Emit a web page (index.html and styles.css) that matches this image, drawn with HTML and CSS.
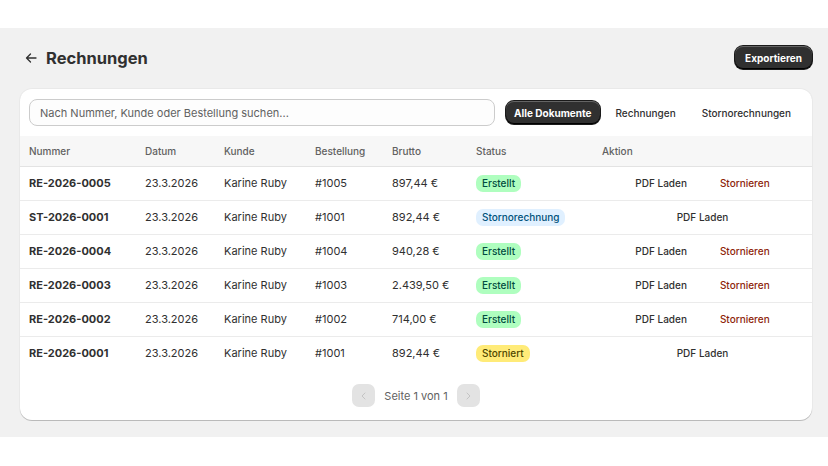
FILE: index.html
```html
<!DOCTYPE html>
<html lang="de">
<head>
    <meta charset="UTF-8">
    <meta name="viewport" content="width=device-width, initial-scale=1.0">
    <title>Rechnungen</title>
    <link rel="stylesheet" href="styles.css">
</head>
<body>
    <div class="topbar"></div>

    <div class="page">
        <div class="page-header">
            <div class="title-wrap">
                <svg class="back" viewBox="0 0 12 12" fill="none" stroke="#303030" stroke-width="1.3" stroke-linecap="round" stroke-linejoin="round">
                    <path d="M11 6H1.5M5.5 2L1.5 6l4 4"/>
                </svg>
                <h1>Rechnungen</h1>
            </div>
            <button class="btn-dark export">Exportieren</button>
        </div>

        <div class="card">
            <div class="toolbar">
                <input type="text" class="search" placeholder="Nach Nummer, Kunde oder Bestellung suchen...">
                <div class="tabs">
                    <button class="btn-dark tab active">Alle Dokumente</button>
                    <button class="tab plain">Rechnungen</button>
                    <button class="tab plain">Stornorechnungen</button>
                </div>
            </div>

            <table class="docs">
                <colgroup>
                    <col style="width:116px">
                    <col style="width:79px">
                    <col style="width:91px">
                    <col style="width:77px">
                    <col style="width:84px">
                    <col style="width:126px">
                    <col>
                </colgroup>
                <thead>
                    <tr>
                        <th>Nummer</th>
                        <th>Datum</th>
                        <th>Kunde</th>
                        <th>Bestellung</th>
                        <th>Brutto</th>
                        <th>Status</th>
                        <th>Aktion</th>
                    </tr>
                </thead>
                <tbody>
                    <tr>
                        <td class="num">RE-2026-0005</td>
                        <td>23.3.2026</td>
                        <td>Karine Ruby</td>
                        <td>#1005</td>
                        <td>897,44 €</td>
                        <td><span class="badge ok">Erstellt</span></td>
                        <td><div class="actions"><a>PDF Laden</a><a class="danger">Stornieren</a></div></td>
                    </tr>
                    <tr>
                        <td class="num">ST-2026-0001</td>
                        <td>23.3.2026</td>
                        <td>Karine Ruby</td>
                        <td>#1001</td>
                        <td>892,44 €</td>
                        <td><span class="badge info">Stornorechnung</span></td>
                        <td><div class="actions"><a>PDF Laden</a></div></td>
                    </tr>
                    <tr>
                        <td class="num">RE-2026-0004</td>
                        <td>23.3.2026</td>
                        <td>Karine Ruby</td>
                        <td>#1004</td>
                        <td>940,28 €</td>
                        <td><span class="badge ok">Erstellt</span></td>
                        <td><div class="actions"><a>PDF Laden</a><a class="danger">Stornieren</a></div></td>
                    </tr>
                    <tr>
                        <td class="num">RE-2026-0003</td>
                        <td>23.3.2026</td>
                        <td>Karine Ruby</td>
                        <td>#1003</td>
                        <td>2.439,50 €</td>
                        <td><span class="badge ok">Erstellt</span></td>
                        <td><div class="actions"><a>PDF Laden</a><a class="danger">Stornieren</a></div></td>
                    </tr>
                    <tr>
                        <td class="num">RE-2026-0002</td>
                        <td>23.3.2026</td>
                        <td>Karine Ruby</td>
                        <td>#1002</td>
                        <td>714,00 €</td>
                        <td><span class="badge ok">Erstellt</span></td>
                        <td><div class="actions"><a>PDF Laden</a><a class="danger">Stornieren</a></div></td>
                    </tr>
                    <tr>
                        <td class="num">RE-2026-0001</td>
                        <td>23.3.2026</td>
                        <td>Karine Ruby</td>
                        <td>#1001</td>
                        <td>892,44 €</td>
                        <td><span class="badge warn">Storniert</span></td>
                        <td><div class="actions"><a>PDF Laden</a></div></td>
                    </tr>
                </tbody>
            </table>

            <!-- pagination -->
            <div class="pager">
                <button class="page-btn" disabled>
                    <svg viewBox="0 0 10 10" fill="none" stroke="#c4c4c4" stroke-width="1" stroke-linecap="round" stroke-linejoin="round"><path d="M6 2L3 5l3 3"/></svg>
                </button>
                <span>Seite 1 von 1</span>
                <button class="page-btn" disabled>
                    <svg viewBox="0 0 10 10" fill="none" stroke="#c4c4c4" stroke-width="1" stroke-linecap="round" stroke-linejoin="round"><path d="M4 2l3 3-3 3"/></svg>
                </button>
            </div>
        </div>
    </div>
</body>
</html>
```

FILE: styles.css
```css
* {
    box-sizing: border-box;
    font-family: 'Inter', 'Noto Sans', sans-serif;
}

body {
    margin: 0;
    background-color: white;
    color: #303030;
    font-size: 11px;
}

.topbar {
    height: 28px;
    background-color: white;
}

.page {
    background-color: #f1f1f1;
    padding: 18px 16px 17px 20px;
}

.page-header {
    display: flex;
    justify-content: space-between;
    align-items: center;
    height: 23px;
    margin-bottom: 20px;
}

.title-wrap {
    display: flex;
    align-items: center;
}

.back {
    width: 12px;
    height: 12px;
    margin-left: 5px;
    margin-right: 9px;
}

h1 {
    margin: 0;
    font-size: 16.5px;
    font-weight: 700;
    color: #303030;
}

button {
    border: none;
    background: none;
    cursor: pointer;
    font-size: 10px;
}

.btn-dark {
    background-color: #303030;
    color: white;
    font-weight: 650;
    border-radius: 8px;
    box-shadow: inset 0 -1px 0 #000, inset 0 1px 0 rgba(255, 255, 255, 0.25), 0 0 0 1px #1a1a1a;
}

.export {
    height: 23px;
    padding: 0 10px;
}

.card {
    background-color: white;
    border-radius: 12px;
    box-shadow: 0 1px 0 rgba(0, 0, 0, 0.08), 0 1px 0 rgba(0, 0, 0, 0.13), 0 0 0 1px rgba(0, 0, 0, 0.03);
    overflow: hidden;
}

.toolbar {
    display: flex;
    align-items: center;
    padding: 10px 8px 10px 9px;
    gap: 11px;
}

.search {
    flex: 1;
    height: 27px;
    border: 1px solid #cccccc;
    border-radius: 8px;
    padding: 0 10px;
    font-size: 11px;
    color: #303030;
    background-color: #fdfdfd;
}

.search::placeholder {
    color: #616161;
}

.tabs {
    display: flex;
    align-items: center;
}

.tab {
    height: 23px;
    padding: 0 8px;
}

.tab.active {
    margin-right: 3px;
}

.tab.plain {
    color: #303030;
    font-weight: 500;
    padding: 0 13px;
}

.docs {
    width: 100%;
    border-collapse: collapse;
    table-layout: fixed;
}

.docs th {
    height: 30px;
    background-color: #f7f7f7;
    color: #616161;
    font-weight: 500;
    font-size: 10px;
    text-align: left;
    padding: 0 9px;
    border-bottom: 1px solid #e3e3e3;
}

.docs td {
    height: 34px;
    padding: 0 9px;
    border-top: 1px solid #ebebeb;
    white-space: nowrap;
}

.docs tbody tr:first-child td {
    border-top: none;
}

.docs .num {
    font-weight: 650;
}

.badge {
    display: inline-block;
    font-size: 10px;
    font-weight: 500;
    padding: 1px 6px;
    border-radius: 7px;
    line-height: 15px;
}

.badge.ok {
    background-color: #affebf;
    color: #014b40;
}

.badge.info {
    background-color: #e0f0ff;
    color: #00527c;
}

.badge.warn {
    background-color: #ffeb78;
    color: #4f4700;
}

.actions {
    display: flex;
    justify-content: center;
    gap: 33px;
    font-size: 10px;
    font-weight: 500;
}

.actions a {
    color: #303030;
    cursor: pointer;
}

.actions a.danger {
    color: #8e1f0b;
}

.pager {
    display: flex;
    justify-content: center;
    align-items: center;
    gap: 9px;
    padding: 14px 0 13px;
    color: #616161;
    font-size: 11px;
}

.page-btn {
    width: 23px;
    height: 23px;
    border-radius: 7px;
    background-color: #e3e3e3;
    display: flex;
    align-items: center;
    justify-content: center;
    padding: 0;
}

.page-btn svg {
    width: 10px;
    height: 10px;
}
```
